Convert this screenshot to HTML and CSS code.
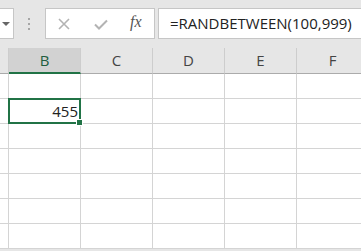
FILE: index.html
```html
<!DOCTYPE html>
<html>
<head>
<meta charset="utf-8">
<link rel="stylesheet" href="styles.css">
</head>
<body>
<div class="app">
  <div class="toolbar">
    <div class="namebox"><span class="arrow"></span></div>
    <div class="grip"><i></i><i></i><i></i></div>
    <div class="fbtns">
      <svg class="ico-x" width="12" height="12" viewBox="0 0 12 12"><path d="M1 1 L11 11 M11 1 L1 11" stroke="#b3b3b3" stroke-width="1.6" fill="none"/></svg>
      <svg class="ico-check" width="14" height="11" viewBox="0 0 14 11"><path d="M1 5.5 L5 9.5 L13 1.5" stroke="#b3b3b3" stroke-width="2" fill="none"/></svg>
      <span class="fx">fx</span>
    </div>
    <div class="finput">=RANDBETWEEN(100,999)</div>
  </div>
  <div class="sheet">
    <div class="hdr colA"></div>
    <div class="hdr sel">B</div>
    <div class="hdr">C</div>
    <div class="hdr">D</div>
    <div class="hdr">E</div>
    <div class="hdr">F</div>

    <div class="cell colA"></div><div class="cell"></div><div class="cell"></div><div class="cell"></div><div class="cell"></div><div class="cell"></div>
    <div class="cell colA"></div><div class="cell active"><span class="val">455</span><span class="handle"></span></div><div class="cell"></div><div class="cell"></div><div class="cell"></div><div class="cell"></div>
    <div class="cell colA"></div><div class="cell"></div><div class="cell"></div><div class="cell"></div><div class="cell"></div><div class="cell"></div>
    <div class="cell colA"></div><div class="cell"></div><div class="cell"></div><div class="cell"></div><div class="cell"></div><div class="cell"></div>
    <div class="cell colA"></div><div class="cell"></div><div class="cell"></div><div class="cell"></div><div class="cell"></div><div class="cell"></div>
    <div class="cell colA"></div><div class="cell"></div><div class="cell"></div><div class="cell"></div><div class="cell"></div><div class="cell"></div>
    <div class="cell colA"></div><div class="cell"></div><div class="cell"></div><div class="cell"></div><div class="cell"></div><div class="cell"></div>
  </div>
</div>
</body>
</html>
```
FILE: styles.css
```css
html, body {
  margin: 0;
  padding: 0;
  background: #e6e6e6;
  overflow: hidden;
}
.app {
  width: 361px;
  height: 251px;
  overflow: hidden;
  font-family: "Open Sans", "Noto Sans", sans-serif;
}
.toolbar {
  display: flex;
  align-items: flex-start;
  height: 48px;
  padding-top: 8px;
  box-sizing: border-box;
}
.namebox {
  width: 14px;
  height: 31px;
  box-sizing: border-box;
  background: #fff;
  border: 1px solid #c6c6c6;
  border-left: none;
  position: relative;
}
.arrow {
  position: absolute;
  left: 2px;
  top: 13px;
  width: 0;
  height: 0;
  border-left: 4px solid transparent;
  border-right: 4px solid transparent;
  border-top: 4px solid #666;
}
.grip {
  width: 4px;
  margin-left: 14px;
  margin-top: 10px;
  display: flex;
  flex-direction: column;
  gap: 3px;
}
.grip i {
  display: block;
  width: 2px;
  height: 2px;
  background: #a6a6a6;
}
.fbtns {
  margin-left: 13px;
  width: 110px;
  height: 31px;
  box-sizing: border-box;
  background: #fff;
  border: 1px solid #c6c6c6;
  display: flex;
  align-items: center;
  position: relative;
}
.ico-x { position: absolute; left: 12px; top: 9px; }
.ico-check { position: absolute; left: 48px; top: 10px; }
.fx {
  position: absolute;
  left: 84px;
  top: 4px;
  font-family: "Liberation Serif", serif;
  font-style: italic;
  font-size: 16px;
  color: #555;
  letter-spacing: 0;
}
.finput {
  margin-left: 3px;
  flex: 1;
  height: 31px;
  box-sizing: border-box;
  background: #fff;
  border: 1px solid #c6c6c6;
  border-right: none;
  padding-left: 11px;
  font-size: 15px;
  line-height: 29px;
  color: #222;
  white-space: nowrap;
}
.sheet {
  display: grid;
  grid-template-columns: 9px repeat(5, 72px);
  grid-template-rows: 26px repeat(7, 25px);
}
.hdr {
  background: #e6e6e6;
  border-right: 1px solid #cdcdcd;
  border-bottom: 1px solid #ababab;
  box-sizing: border-box;
  text-align: center;
  font-size: 15px;
  line-height: 25px;
  color: #444;
}
.hdr.sel {
  background: #d2d2d2;
  border-bottom: 2px solid #217346;
  line-height: 24px;
  color: #1f5e40;
}
.cell {
  background: #fff;
  border-right: 1px solid #d4d4d4;
  border-bottom: 1px solid #d4d4d4;
  box-sizing: border-box;
  position: relative;
}
.active {
  text-align: right;
}
.active::after {
  content: "";
  position: absolute;
  left: -1px;
  top: -1px;
  right: -1px;
  bottom: -1px;
  border: 2px solid #217346;
}
.val {
  display: block;
  padding-right: 2px;
  font-size: 15px;
  line-height: 24px;
  color: #222;
}
.handle {
  position: absolute;
  right: -3px;
  bottom: -3px;
  width: 5px;
  height: 5px;
  background: #217346;
  border: 1px solid #fff;
  z-index: 2;
}
```
